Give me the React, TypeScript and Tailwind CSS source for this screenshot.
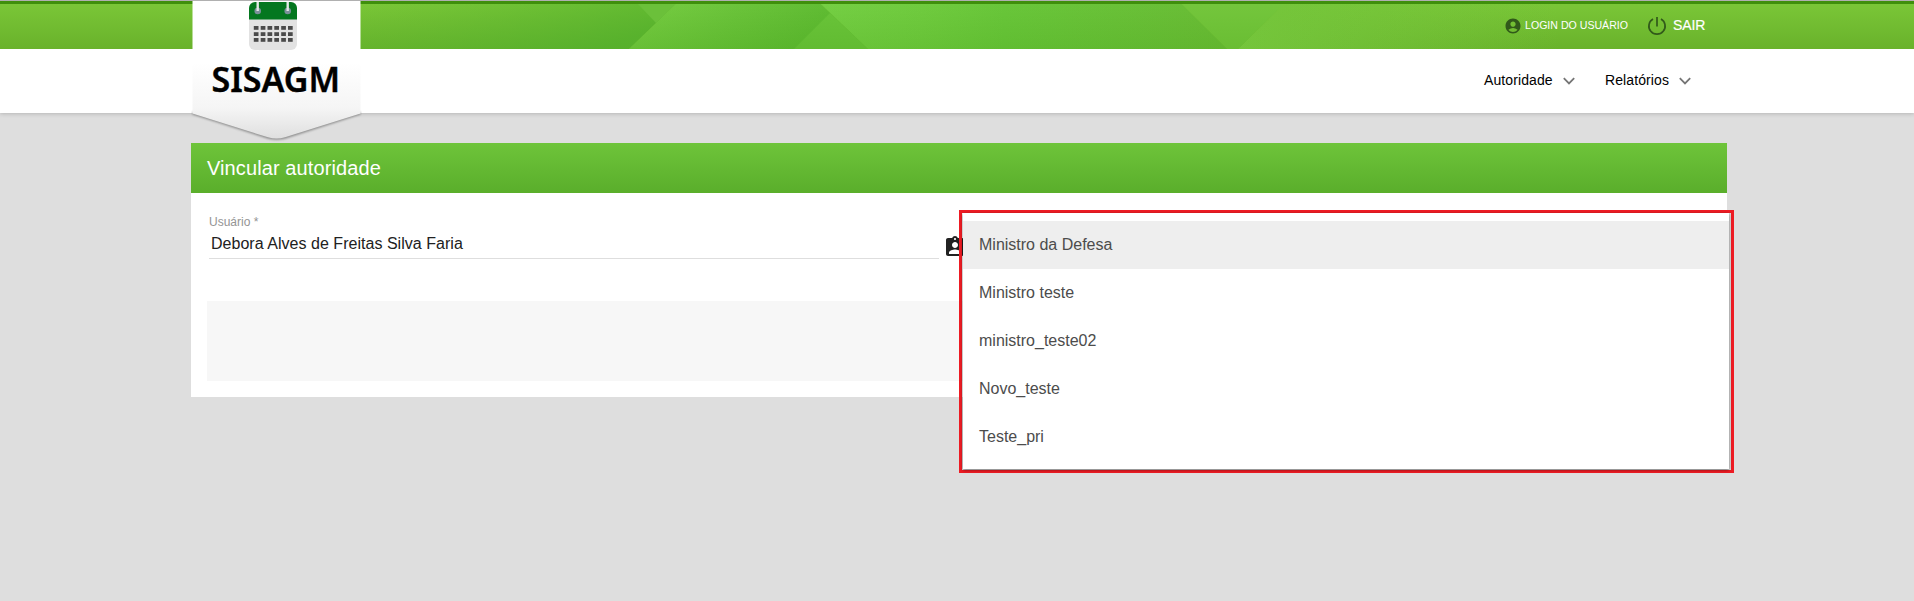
import React from "react";
import { MdAccountCircle, MdAssignmentInd } from "react-icons/md";

const options = ["Ministro da Defesa", "Ministro teste", "ministro_teste02", "Novo_teste", "Teste_pri"];

function Chevron() {
  return (
    <svg className="h-[12px] w-[14px]" viewBox="0 0 14 12" fill="none" stroke="#757575" strokeWidth="1.8">
      <path d="M1.8 3.2 7 8.4l5.2-5.2" />
    </svg>
  );
}

function HeaderPattern() {
  return (
    <svg className="absolute inset-0 h-full w-full" viewBox="0 0 1914 45" preserveAspectRatio="none">
      <defs>
        <linearGradient id="p1" x1="0" x2="1" y1="0" y2="0.4">
          <stop offset="0" stopColor="#5cba32" stopOpacity="0" />
          <stop offset="1" stopColor="#51b02c" stopOpacity="0.75" />
        </linearGradient>
        <linearGradient id="p2" x1="0" x2="1" y1="0" y2="0.2">
          <stop offset="0" stopColor="#78cd43" />
          <stop offset="1" stopColor="#5bb830" />
        </linearGradient>
        <linearGradient id="p3" x1="0" x2="1">
          <stop offset="0" stopColor="#75cf44" />
          <stop offset="0.25" stopColor="#70cb3f" />
          <stop offset="0.45" stopColor="#69c63a" />
          <stop offset="1" stopColor="#6abc36" />
        </linearGradient>
        <linearGradient id="p4" x1="0" x2="1">
          <stop offset="0" stopColor="#7ccb41" />
          <stop offset="1" stopColor="#7acb3f" stopOpacity="0" />
        </linearGradient>
        <linearGradient id="shade" x1="0" x2="0" y1="0" y2="1">
          <stop offset="0" stopColor="#3f9a10" stopOpacity="0" />
          <stop offset="1" stopColor="#3f9a10" stopOpacity="0.2" />
        </linearGradient>
        <linearGradient id="fade" x1="0" x2="1" y1="0" y2="0">
          <stop offset="0" stopColor="#3f9a10" stopOpacity="0.12" />
          <stop offset="1" stopColor="#3f9a10" stopOpacity="0" />
        </linearGradient>
      </defs>
      <path d="M360 0H676L629 45H360Z" fill="url(#p1)" />
      <path d="M638 0H676L656 19Z" fill="#6bc03a" />
      <path d="M676 0H821L868 45H629Z" fill="url(#p2)" />
      <path d="M830 9 868 45H794Z" fill="#6ac43a" />
      <path d="M821 0H1182L1227 45H868Z" fill="url(#p3)" />
      <path d="M1182 0H1284L1238 45H1227Z" fill="#74c63c" />
      <path d="M1284 0H1560V45H1238Z" fill="url(#p4)" />
      <path d="M676 0H1284L1238 45H629Z" fill="url(#shade)" />
      <path d="M1284 0H1560V45H1238Z" fill="url(#fade)" />
    </svg>
  );
}

function Logo() {
  return (
    <svg className="absolute top-px left-[191px] h-[142px] w-[171px]" viewBox="191 1 171 142">
      <defs>
        <linearGradient id="badge" x1="0" x2="0" y1="0" y2="1">
          <stop offset="0" stopColor="#fff" />
          <stop offset="0.45" stopColor="#fff" />
          <stop offset="0.78" stopColor="#f5f5f5" />
          <stop offset="1" stopColor="#dfdfdf" />
        </linearGradient>
        <filter id="soft" x="-10%" y="-10%" width="120%" height="120%">
          <feGaussianBlur stdDeviation="0.8" />
        </filter>
      </defs>
      <path
        d="M192.500 114.500 268 138.700Q276.500 141 285 138.700L360.500 114.500V112H192.500Z"
        fill="#8c8c8c"
        filter="url(#soft)"
      />
      <path d="M192.500 0H360.500V113.500L285 137.300Q276.500 139.700 268 137.300L192.500 113.500Z" fill="url(#badge)" />
      <path d="M249 8a6 6 0 0 1 6-6h36a6 6 0 0 1 6 6v12h-48z" fill="#04771f" />
      <path d="M249 19.500h48V44a6 6 0 0 1-6 6h-36a6 6 0 0 1-6-6z" fill="#e2e2e2" />
      <g fill="#7b8f99">
        <circle cx="257.700" cy="11" r="3.300" />
        <circle cx="287.700" cy="11" r="3.300" />
      </g>
      <path d="M257.700 2v9M287.700 2v9" stroke="#e4e8e6" strokeWidth="2.400" />
      <g fill="#4a4a4a">
        {[26, 32.2, 38].map((y) =>
          [253.8, 260.7, 267.5, 274.3, 281.2, 288].map((x) => (
            <rect key={`${x}-${y}`} x={x} y={y} width="4.700" height="3.800" />
          )),
        )}
      </g>
      <text
        x="211.500"
        y="91.800"
        textLength="128.500"
        lengthAdjust="spacingAndGlyphs"
        stroke="#000"
        strokeWidth="0.400"
        className="font-['Noto_Sans',sans-serif] text-[34px] font-semibold"
      >
        SISAGM
      </text>
    </svg>
  );
}

function Header() {
  return (
    <header className="relative">
      <div className="h-px bg-[#b0b0b0]" />
      <div className="h-[3px] bg-[#3f8f0c]" />
      <div className="relative h-[45px] bg-linear-to-b from-[#7ac637] to-[#69b22b]">
        <HeaderPattern />
        <div className="relative flex h-full items-center pl-[1504px] text-white">
          <MdAccountCircle className="-mt-[2px] size-[18px] text-[#31591a]" />
          <span className="-mt-[2px] ml-[3px] w-[104px] text-[10.6px] whitespace-nowrap">LOGIN DO USUÁRIO</span>
          <svg
            className="-mt-[2px] ml-[18px] size-[20px]"
            viewBox="0 0 20 20"
            fill="none"
            stroke="#31591a"
            strokeWidth="1.700"
          >
            <path d="M10 1v9.500M6 3a8.100 8.100 0 1 0 8 0" />
          </svg>
          <span className="-mt-[3px] ml-[6px] text-[14px] tracking-[-0.1px] [-webkit-text-stroke:0.2px_white]">SAIR</span>
        </div>
      </div>
      <nav className="flex h-16 items-center bg-white pb-[2px] pl-[1484px] text-[14px] text-black shadow-[0_1px_4px_rgba(0,0,0,0.18)]">
        <span className="w-[69px] tracking-[0.1px]">Autoridade</span>
        <span className="ml-[9px] w-[43px] pt-px">
          <Chevron />
        </span>
        <span className="w-[64px] tracking-[0.1px]">Relatórios</span>
        <span className="ml-[9px] pt-px">
          <Chevron />
        </span>
      </nav>
      <Logo />
    </header>
  );
}

function Dropdown() {
  return (
    <div className="absolute top-[210px] left-[959px] h-[263px] w-[775px] border-3 border-[#ee1c24]">
      <ul className="ml-px h-[256px] w-[766px] bg-white py-2 text-[16px] text-[#4c4c4c] shadow-[0_1px_3px_rgba(0,0,0,0.5)]">
        {options.map((name, i) => (
          <li key={name} className={`flex h-12 items-center pl-[16px] ${i === 0 ? "bg-[#eeeeee]" : ""}`}>
            {name}
          </li>
        ))}
      </ul>
    </div>
  );
}

export default function App() {
  return (
    <div className="relative h-[601px] w-[1914px] overflow-hidden bg-[#dedede] font-['Liberation_Sans',Arial,sans-serif]">
      <Header />
      <main className="mt-[30px] ml-[191px] h-[254px] w-[1536px] bg-white">
        <h1 className="flex h-[50px] items-center bg-linear-to-b from-[#6ec43a] to-[#5aae2b] pl-4 text-[20px] tracking-[0.1px] text-white">
          Vincular autoridade
        </h1>
        <div className="flex h-[108px] items-start px-[18px] pt-[20px]">
          <div className="w-[730px] border-b border-[#dedede]">
            <div className="h-[18px] text-[12px] leading-[18px] text-[#949494]">Usuário *</div>
            <div className="h-[27px] pl-[2px] text-[16px] leading-[25px] tracking-[0.03px] text-[#212121]">
              Debora Alves de Freitas Silva Faria
            </div>
          </div>
          <MdAssignmentInd className="mt-[22px] ml-[4px] size-[24px] text-[#222]" />
        </div>
        <div className="mr-4 ml-4 h-20 bg-[#f7f7f7]" />
      </main>
      <Dropdown />
    </div>
  );
}
